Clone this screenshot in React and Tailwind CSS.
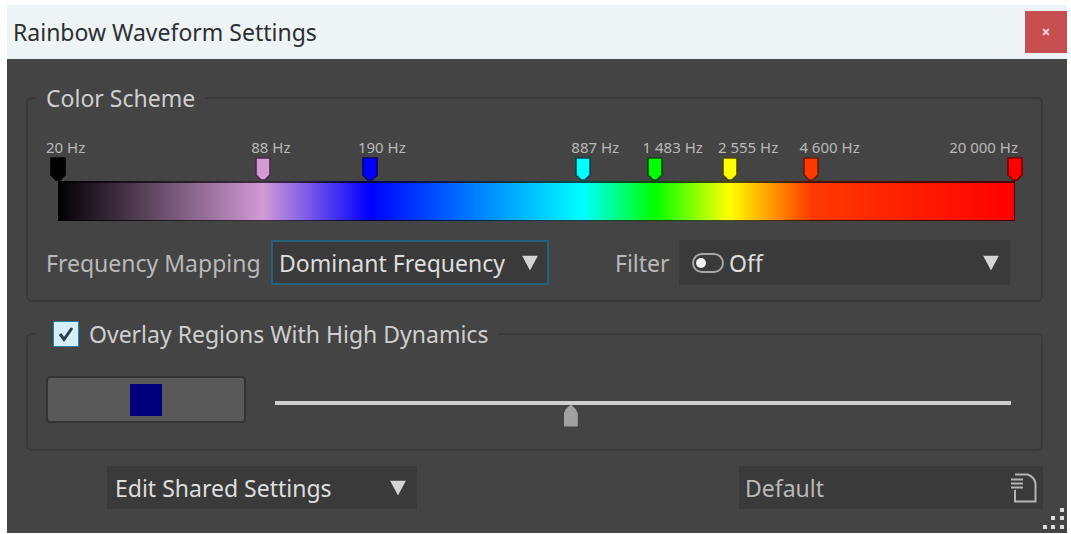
import React, { useState } from "react";

const MIN_HZ = 20;
const MAX_HZ = 20000;

const STOPS = [
  { hz: 20, label: "20 Hz", color: "#000000", edge: "#000000" },
  { hz: 88, label: "88 Hz", color: "#d29bd6", edge: "#4a2a4c" },
  { hz: 190, label: "190 Hz", color: "#0000ff", edge: "#000078" },
  { hz: 887, label: "887 Hz", color: "#00ffff", edge: "#06484c" },
  { hz: 1483, label: "1 483 Hz", color: "#00ff00", edge: "#044a08" },
  { hz: 2555, label: "2 555 Hz", color: "#ffff00", edge: "#4c4a06" },
  { hz: 4600, label: "4 600 Hz", color: "#ff3a00", edge: "#6a1c06" },
  { hz: 20000, label: "20 000 Hz", color: "#ff0000", edge: "#780000" },
];

// log scale position, in percent of the bar
function position(hz) {
  return (Math.log(hz / MIN_HZ) / Math.log(MAX_HZ / MIN_HZ)) * 100;
}

export default function App() {
  return (
    <div className="bg-white pt-[5px] pr-1 pl-[7px] font-['Noto_Sans','Open_Sans',sans-serif] text-[23px] leading-7">
      <div className="relative bg-[#444444]">
        <TitleBar />
        <div className="pt-[25px] pr-6 pb-6 pl-[19px]">
          <ColorScheme />
          <Overlay />
          <Footer />
        </div>
        <ResizeGrip />
      </div>
    </div>
  );
}

function TitleBar() {
  return (
    <div className="flex h-[54px] items-center justify-between bg-[#eef3f5] pl-1.5">
      <h1 className="text-[#2c2f31]">Rainbow Waveform Settings</h1>
      <button
        aria-label="Close"
        className="flex size-[42px] items-center justify-center bg-[#c74e50]"
      >
        <svg viewBox="0 0 8 8" className="size-2" stroke="#f3cfd0" strokeWidth="2">
          <path d="M1 1l6 6M7 1L1 7" />
        </svg>
      </button>
    </div>
  );
}

function ColorScheme() {
  const gradient = STOPS.map((s) => `${s.color} ${position(s.hz)}%`).join(", ");

  return (
    <fieldset className="rounded-md border-2 border-[#3a3a3a] px-2">
      <legend className="px-2.5 text-[#cfcfcf]">Color Scheme</legend>
      <div className="pt-[25px] pr-[18px] pb-[15px] pl-[22px]">
        <div className="relative h-11">
          {STOPS.map((s) => (
            <Marker key={s.hz} stop={s} />
          ))}
        </div>
        <div
          className="h-10 border border-t-2 border-black/70 bg-origin-border"
          style={{ backgroundImage: `linear-gradient(to right, ${gradient})` }}
        />
      </div>
      <div className="flex items-center pt-1 pr-[23px] pb-[15px] pl-2.5">
        <label htmlFor="mapping" className="w-[225px] text-[#b9b9b9]">
          Frequency Mapping
        </label>
        <div className="w-[278px]">
          <Dropdown
            id="mapping"
            options={["Dominant Frequency", "Spectral Centroid"]}
            className="h-[45px] border-2 border-[#25607c] pl-1.5"
          />
        </div>
        <label htmlFor="filter" className="ml-[66px] w-16 text-[#b9b9b9]">
          Filter
        </label>
        <div className="relative flex-1">
          <Dropdown id="filter" options={["Off", "On"]} className="h-[45px] pl-[50px]" />
          <svg
            viewBox="0 0 32 20"
            className="pointer-events-none absolute top-[13px] left-[13px] h-5 w-8"
            fill="none"
          >
            <rect x="1" y="1" width="30" height="18" rx="9" stroke="#a8a8a8" strokeWidth="2" />
            <circle cx="9" cy="10" r="5" fill="#f2f2f2" />
          </svg>
        </div>
      </div>
    </fieldset>
  );
}

function Marker({ stop }) {
  const last = stop.hz === MAX_HZ;
  const left = `${position(stop.hz)}%`;

  return (
    <>
      <span
        className={`absolute top-0 text-[15px] leading-5 whitespace-nowrap text-[#b9b9b9] ${
          last ? "-right-[3px]" : "-ml-3"
        }`}
        style={last ? undefined : { left }}
      >
        {stop.label}
      </span>
      <svg
        viewBox="0 0 16 24"
        className="absolute bottom-0 h-6 w-4 -translate-x-1/2"
        style={{ left }}
      >
        <path
          d="M1 1h14v17l-5 5h-4l-5-5z"
          fill={stop.color}
          stroke={stop.edge}
          strokeWidth="1.6"
          strokeLinejoin="round"
        />
      </svg>
    </>
  );
}

function Dropdown({ id, label, options, className }) {
  return (
    <div className="relative">
      <select
        id={id}
        aria-label={label}
        className={`block w-full appearance-none bg-[#3a3a3a] pr-8 leading-9 text-[#dedede] outline-none ${className}`}
      >
        {options.map((o) => (
          <option key={o}>{o}</option>
        ))}
      </select>
      <svg
        viewBox="0 0 16 15"
        className="pointer-events-none absolute top-1/2 right-[11px] h-[15px] w-4 -translate-y-1/2"
        fill="#d4d4d6"
      >
        <path d="M0 0h16L8 15z" />
      </svg>
    </div>
  );
}

function Overlay() {
  const [checked, setChecked] = useState(true);
  const [amount, setAmount] = useState(40);

  return (
    <fieldset className="mt-[18px] rounded-md border-2 border-[#3a3a3a] px-2">
      <legend className="px-2.5">
        <label className="flex items-center gap-2.5 pl-[7px] text-[#cfcfcf]">
          <span className="relative size-[26px]">
            <input
              type="checkbox"
              checked={checked}
              onChange={(e) => setChecked(e.target.checked)}
              className="block size-[26px] appearance-none border border-[#2f7d9c] bg-[#d3effa]"
            />
            {checked && (
              <svg
                viewBox="0 0 26 26"
                className="pointer-events-none absolute inset-0"
                fill="none"
                stroke="#2b3d4a"
                strokeWidth="3"
              >
                <path d="M7 13l4 5.500L19 7" />
              </svg>
            )}
          </span>
          Overlay Regions With High Dynamics
        </label>
      </legend>
      <div className="flex items-center gap-[29px] pt-7 pr-[22px] pb-[26px] pl-2.5">
        <button
          aria-label="Overlay color"
          className="flex h-[47px] w-[200px] items-center justify-center rounded-sm border-2 border-[#333333] bg-[#595959]"
        >
          <span className="size-8 bg-[#00007f]" />
        </button>
        <input
          type="range"
          aria-label="Dynamics threshold"
          value={amount}
          onChange={(e) => setAmount(Number(e.target.value))}
          className="mt-1.5 h-6 min-w-0 flex-1 appearance-none bg-transparent [&::-webkit-slider-runnable-track]:h-1 [&::-webkit-slider-runnable-track]:bg-[#cfcfcf] [&::-webkit-slider-thumb]:mt-1 [&::-webkit-slider-thumb]:h-[22px] [&::-webkit-slider-thumb]:w-3.5 [&::-webkit-slider-thumb]:appearance-none [&::-webkit-slider-thumb]:bg-[#a0a0a0] [&::-webkit-slider-thumb]:[clip-path:polygon(50%_0,85%_20%,100%_40%,100%_100%,0_100%,0_40%,15%_20%)]"
        />
      </div>
    </fieldset>
  );
}

function Footer() {
  return (
    <div className="mt-[15px] flex justify-between pl-[81px]">
      <div className="w-[310px]">
        <Dropdown
          label="Shared settings"
          options={["Edit Shared Settings", "Edit Own Settings"]}
          className="h-[43px] pl-2"
        />
      </div>
      <button className="flex h-[43px] w-[304px] items-center justify-between bg-[#3a3a3a] pr-1.5 pl-1.5 text-[#b9b9b9]">
        Default
        <svg viewBox="0 0 26 30" className="h-[30px] w-[26px]" fill="none" stroke="#b4b4b4" strokeWidth="2">
          <path d="M4 1.500h12.500Q24 4.500 24.500 11V28.500H4V17" />
          <path d="M0 6.500h12M0 10.500h12M0 14.500h12" />
        </svg>
      </button>
    </div>
  );
}

function ResizeGrip() {
  return (
    <svg viewBox="0 0 21 21" className="absolute right-[3px] bottom-1 size-[21px]" fill="#dcdcdc">
      <path d="M17 0h4v4h-4zM8 8h4v4h-4zM17 8h4v4h-4zM0 17h4v4h-4zM8 17h4v4h-4zM17 17h4v4h-4z" />
    </svg>
  );
}
